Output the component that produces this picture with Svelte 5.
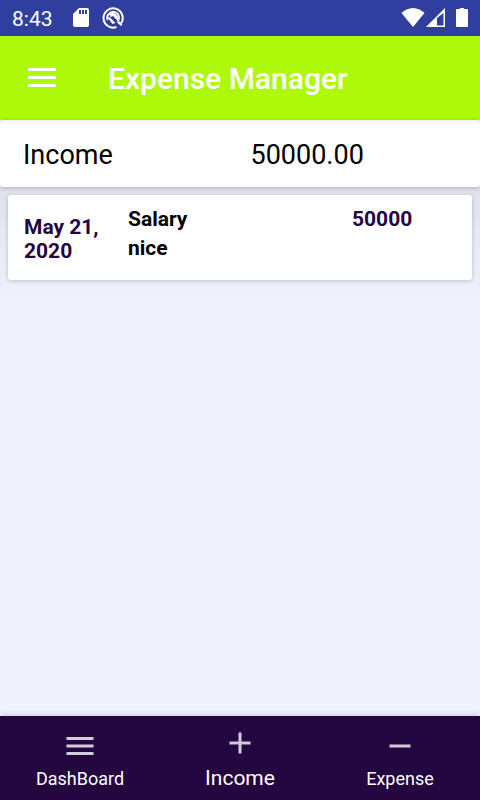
<script>
  const entries = [
    { date: 'May 21, 2020', type: 'Salary', note: 'nice', amount: '50000' }
  ];
  const tabs = [
    { label: 'DashBoard', icon: 'M3 18h18v-2H3v2zm0-5h18v-2H3v2zm0-7v2h18V6H3z' },
    { label: 'Income', icon: 'M19 13h-6v6h-2v-6H5v-2h6V5h2v6h6v2z' },
    { label: 'Expense', icon: 'M19 13H5v-2h14v2z' }
  ];
  let active = $state('Income');
</script>

<div class="screen">
  <div class="status">
    <span class="time">8:43</span>
    <svg class="sd" width="16" height="20" viewBox="0 0 16 20" aria-hidden="true">
      <path fill="#fff" fill-rule="evenodd" d="M6 0h8a2 2 0 0 1 2 2v15a2 2 0 0 1-2 2H2a2 2 0 0 1-2-2V6zM6 2v4h2V2zM9 2v4h2V2zM12 2v4h2V2z" />
    </svg>
    <svg class="sync" width="22" height="22" viewBox="0 0 22 22" aria-hidden="true">
      <path fill="none" stroke="#fff" stroke-width="2" d="M19 16.500A9.600 9.600 0 1 0 14.500 20" />
      <path fill="none" stroke="#fff" stroke-width="2" d="M5.800 13A5.700 5.700 0 0 1 8 6M8 6A5.700 5.700 0 0 1 15.500 14.500" />
      <path fill="#fff" d="M7 6.500l4.500-1.500 4.500 4.500v4.500l-5-5-2.500 1zM5.500 10.500l2-.5 6 6-3 1zM15 15.500l2-1.500 3.500 3.500-1.500 1.500z" />
    </svg>
    <span class="spacer"></span>
    <svg width="24" height="20" viewBox="0 0 24 20" aria-hidden="true">
      <path fill="#fff" d="M12 19L.5 5C3.500 2.300 7.500 0 12 0s8.500 2.300 11.500 5z" />
    </svg>
    <svg class="signal" width="20" height="20" viewBox="0 0 20 20" aria-hidden="true">
      <path fill="#fff" fill-rule="evenodd" d="M0 19L19 0v19zM11 10v7.500h6.500V5z" />
    </svg>
    <svg class="battery" width="12" height="20" viewBox="0 0 12 20" aria-hidden="true">
      <path fill="#fff" d="M4 0h4v1h3a1 1 0 0 1 1 1v16a1 1 0 0 1-1 1H1a1 1 0 0 1-1-1V2a1 1 0 0 1 1-1h3z" />
    </svg>
  </div>

  <header>
    <button class="menu" aria-label="Open menu">
      <svg width="28" height="20" viewBox="0 0 28 20" aria-hidden="true">
        <path fill="#fff" d="M0 0h28v3H0zM0 8h28v3H0zM0 16h28v3H0z" />
      </svg>
    </button>
    <h1>Expense Manager</h1>
  </header>

  <main>
    <section class="total">
      <span>Income</span>
      <span>50000.00</span>
    </section>
    <ul>
      {#each entries as entry}
        <li>
          <span class="date">{entry.date}</span>
          <div class="details">
            <span>{entry.type}</span>
            <span>{entry.note}</span>
          </div>
          <span class="amount">{entry.amount}</span>
        </li>
      {/each}
    </ul>
  </main>

  <nav>
    {#each tabs as tab}
      <button
        class:active={active === tab.label}
        aria-current={active === tab.label ? 'page' : undefined}
        onclick={() => (active = tab.label)}
      >
        <svg width="36" height="36" viewBox="0 0 24 24" aria-hidden="true">
          <path fill="#d3ccd9" d={tab.icon} />
        </svg>
        <span>{tab.label}</span>
      </button>
    {/each}
  </nav>
</div>

<style>
  .screen {
    display: flex;
    flex-direction: column;
    min-height: 100vh;
    background: #eff2fc;
    color: #000;
    font-family: Roboto, sans-serif;
  }
  svg {
    display: block;
    flex: none;
  }
  button {
    border: 0;
    margin: 0;
    padding: 0;
    background: none;
    color: inherit;
    font: inherit;
    cursor: pointer;
  }
  .status {
    display: flex;
    align-items: center;
    box-sizing: border-box;
    height: 36px;
    padding: 0 12px;
    background: #303f9f;
    color: #fff;
  }
  .time {
    padding-top: 2px;
    font-size: 21px;
    line-height: 36px;
  }
  .sd {
    margin-left: 20px;
  }
  .sync {
    margin-left: 13px;
  }
  .spacer {
    flex: 1;
  }
  .signal {
    margin-left: 1px;
  }
  .battery {
    margin-left: 10px;
  }
  header {
    display: flex;
    align-items: center;
    height: 84px;
    padding-left: 16px;
    background: #aef90a;
    color: #fff;
  }
  .menu {
    padding: 12px;
  }
  h1 {
    margin: 0 0 0 40px;
    padding-top: 2px;
    font-size: 30px;
    font-weight: 500;
    line-height: 36px;
  }
  main {
    flex: 1;
    background: linear-gradient(#dfe2ec 72px, #eff2fc 180px);
  }
  .total {
    display: grid;
    grid-template-columns: 1fr 1fr;
    column-gap: 22px;
    padding: 17px 24px 14px 23px;
    border-radius: 3px;
    background: linear-gradient(#f4f4f4, #fff 6px);
    box-shadow: 0 1px 4px #0003;
    font-size: 27px;
    line-height: 36px;
  }
  ul {
    margin: 0;
    padding: 8px;
    list-style: none;
  }
  li {
    display: grid;
    grid-template-columns: 80px 1fr 104px;
    column-gap: 24px;
    padding: 10px 16px 17px;
    border-radius: 3px;
    background: #fff;
    box-shadow: 0 1px 4px #0003;
    font-size: 21px;
    font-weight: 700;
    line-height: 29px;
  }
  .date {
    padding-top: 10px;
    line-height: 24px;
  }
  .date,
  .amount {
    color: #240640;
  }
  .details {
    display: flex;
    flex-direction: column;
  }
  nav {
    display: flex;
    height: 84px;
    background: #240640;
    color: #fff;
    box-shadow: 0 0 6px #0003;
  }
  nav button {
    display: flex;
    flex: 1;
    flex-direction: column;
    align-items: center;
    padding-top: 12px;
    font-size: 18px;
    line-height: 30px;
  }
  nav .active {
    padding-top: 9px;
    font-size: 21px;
    line-height: 34px;
  }
</style>
